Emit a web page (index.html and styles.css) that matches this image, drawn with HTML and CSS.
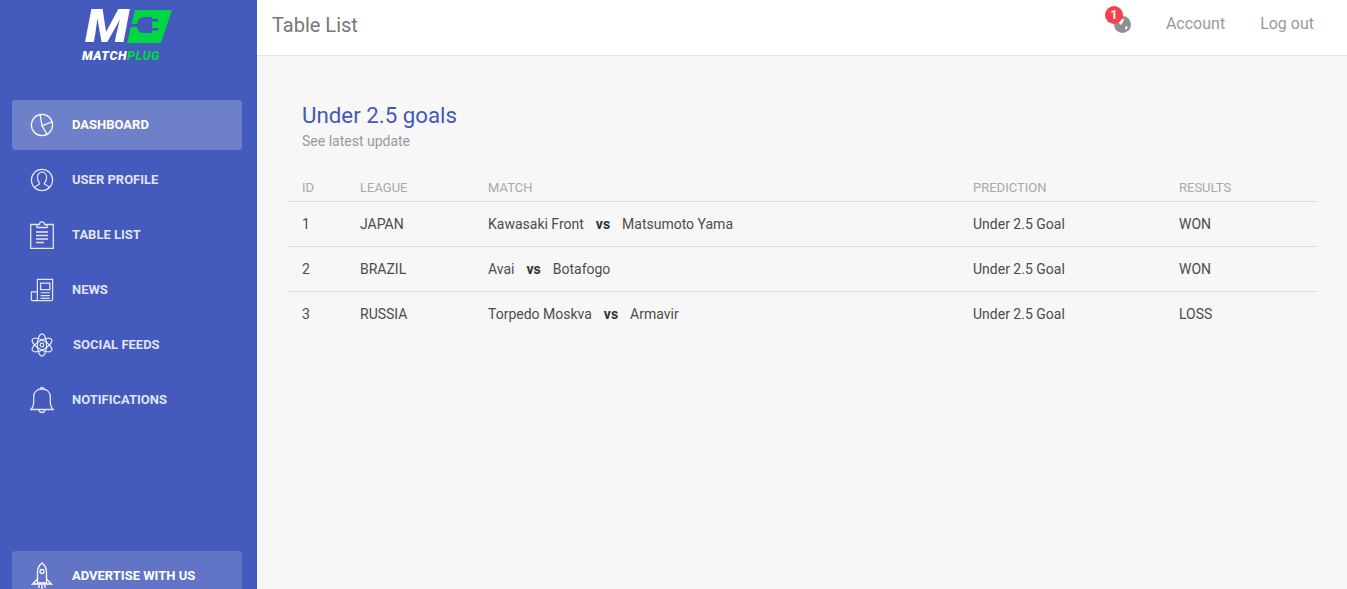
FILE: index.html
```html
<!DOCTYPE html>
<html lang="en">
<head>
<meta charset="utf-8">
<title>Table List</title>
<link rel="stylesheet" href="styles.css">
</head>
<body>
<div class="app">
  <aside class="sidebar">
    <div class="logo">
      <div class="logo-mark">
        <span class="logo-m">M</span>
        <svg class="logo-plug" width="46" height="33" viewBox="0 0 46 33">
          <path fill="#00d643" d="M8 0H45L34 33H0Z"/>
          <path fill="#4458bb" d="M2 14H10C10.500 10 13 7 17 7H25V9H31V11.500H25V18H31V20.500H25V23H17C13 23 10.500 20.500 10 17H1Z"/>
        </svg>
      </div>
      <div class="logo-text"><span>MATCH</span><span class="logo-green">PLUG</span></div>
    </div>
    <nav class="nav">
      <a class="nav-item active">
        <svg class="nav-icon" viewBox="0 0 26 26"><circle cx="13" cy="13" r="11.5"/><path d="M11 1.700L13 14L24 9.500M13 14L18.500 23"/></svg>
        <span>DASHBOARD</span>
      </a>
      <a class="nav-item">
        <svg class="nav-icon" viewBox="0 0 26 26"><circle cx="13" cy="13" r="11.500"/><path d="M5 21.500C6 18.500 10 18.500 10.500 17C9 15 8 12.500 8 10C8 7 10 4.500 13 4.500S18 7 18 10C18 12.500 17 15 15.500 17C16 18.500 20 18.500 21 21.500"/></svg>
        <span>USER PROFILE</span>
      </a>
      <a class="nav-item">
        <svg class="nav-icon tall" viewBox="0 0 24 28"><path d="M7 3.500H.7V27.300H23.300V3.500H17M7 3.500V6.500H17V3.500H14.500C14.500 0 9.500 0 9.500 3.500Z"/><path d="M6 11H18M6 14.500H18M6 18H18M6 21.500H14"/></svg>
        <span>TABLE LIST</span>
      </a>
      <a class="nav-item">
        <svg class="nav-icon" viewBox="0 0 26 26"><path d="M8 20V1.500H24.500V23C24.500 24 24 24.500 23 24.500H3C2 24.500 1.500 24 1.500 23V15H8"/><path d="M8 20V23C8 24 7.500 24.500 6 24.500"/><path d="M11.500 5.500H21.500V12.500H11.500ZM11.500 16H21.500M11.500 19H21.500M11.500 22H21.500"/></svg>
        <span>NEWS</span>
      </a>
      <a class="nav-item">
        <svg class="nav-icon" viewBox="0 0 26 26"><ellipse cx="13" cy="13" rx="5" ry="12"/><ellipse cx="13" cy="13" rx="5" ry="12" transform="rotate(60 13 13)"/><ellipse cx="13" cy="13" rx="5" ry="12" transform="rotate(120 13 13)"/><circle cx="13" cy="13" r="2"/></svg>
        <span class="label-social">SOCIAL FEEDS</span>
      </a>
      <a class="nav-item">
        <svg class="nav-icon tall" viewBox="0 0 24 28"><path d="M.7 23.500C3 21.500 3.700 19 3.700 16V11C3.700 6 7 3 12 3S20.300 6 20.300 11V16C20.300 19 21 21.500 23.300 23.500Z"/><path d="M10.500 2.700C10.500 1 13.500 1 13.500 2.700M9 24C9 27.300 15 27.300 15 24"/></svg>
        <span>NOTIFICATIONS</span>
      </a>
      <a class="nav-item advertise">
        <svg class="nav-icon tall" viewBox="0 0 24 28"><path d="M7.500 21V10C7.500 6 9.500 3 12 1C14.500 3 16.500 6 16.500 10V21Z"/><circle cx="12" cy="9.500" r="2"/><path d="M7.500 17L2.500 22H21.500L16.500 17M12 23V28M9 23V26M15 23V26"/></svg>
        <span>ADVERTISE WITH US</span>
      </a>
    </nav>
  </aside>
  <div class="main">
    <header class="topbar">
      <div class="page-title">Table List</div>
      <div class="top-links">
        <a class="globe-link">
          <svg class="globe" width="17" height="17" viewBox="0 0 17 17"><circle cx="8.500" cy="8.500" r="8.500" fill="#8f8f8f"/><path fill="#fff" d="M4 3L10 3L9 6L7 9L5 7ZM12 10L14 11L12 14L11 12Z"/></svg>
          <span class="badge">1</span>
        </a>
        <a class="top-link">Account</a>
        <a class="top-link">Log out</a>
      </div>
    </header>
    <main class="content">
      <div class="card-head">
        <h2 class="card-title">Under 2.5 goals</h2>
        <p class="card-sub">See latest update</p>
      </div>
      <table class="table">
        <thead>
          <tr><th class="c-id">ID</th><th class="c-league">LEAGUE</th><th class="c-match">MATCH</th><th class="c-pred">PREDICTION</th><th>RESULTS</th></tr>
        </thead>
        <tbody>
          <tr><td>1</td><td>JAPAN</td><td>Kawasaki Front <b>vs</b> Matsumoto Yama</td><td>Under 2.5 Goal</td><td>WON</td></tr>
          <tr><td>2</td><td>BRAZIL</td><td>Avai <b>vs</b> Botafogo</td><td>Under 2.5 Goal</td><td>WON</td></tr>
          <tr><td>3</td><td>RUSSIA</td><td>Torpedo Moskva <b>vs</b> Armavir</td><td>Under 2.5 Goal</td><td>LOSS</td></tr>
        </tbody>
      </table>
    </main>
  </div>
</div>
</body>
</html>
```
FILE: styles.css
```css
* { box-sizing: border-box; }
html, body { margin: 0; height: 100%; overflow: hidden; }
body { font-family: Roboto, "Liberation Sans", sans-serif; color: #333; background: #f7f7f7; }
.app { display: flex; height: 589px; overflow: hidden; }

.sidebar { width: 257px; flex: none; background: #445abc; padding: 10px 15px 0 12px; overflow: hidden; }
.logo { height: 90px; display: flex; flex-direction: column; padding-left: 70px; }
.logo-mark { display: flex; align-items: flex-start; height: 33px; padding-left: 3px; }
.logo-m { display: block; width: 42px; font-size: 46px; line-height: 33px; font-weight: 900; font-style: italic; color: #fff; transform: scaleX(1.12); transform-origin: left center; }
.logo-plug { flex: none; }
.logo-text { margin-top: 7px; font-size: 12.5px; letter-spacing: .55px; line-height: 12px; font-weight: 900; font-style: italic; color: #fff; white-space: nowrap; }
.logo-green { color: #00d643; }

.nav { display: flex; flex-direction: column; gap: 5px; }
.nav-item { display: flex; align-items: center; height: 50px; flex: none; border-radius: 4px; padding-left: 18px; color: rgba(255,255,255,.85); font-size: 13px; font-weight: 700; }
.nav-item span { margin: 0 0 2px 18px; }
.nav-icon { width: 24px; height: 24px; flex: none; fill: none; stroke: currentColor; stroke-width: 1.3; }
.nav-icon.tall { height: 28px; }
.nav-item .label-social { margin-left: 19px; }
.active { background: rgba(255,255,255,.23); color: #fff; }
.advertise { margin-top: 121px; background: rgba(255,255,255,.16); color: #fff; }

.main { flex: 1; min-width: 0; display: flex; flex-direction: column; }
.topbar { height: 56px; flex: none; background: #fff; border-bottom: 1px solid #e4e4e4; display: flex; align-items: center; justify-content: space-between; padding: 0 33px 0 15px; }
.page-title { font-size: 20px; color: #777; position: relative; top: -3px; }
.top-links { display: flex; align-items: center; gap: 35px; position: relative; top: -4px; }
.top-link { font-size: 16px; color: #9a9a9a; }
.globe-link { position: relative; display: block; width: 17px; height: 17px; top: 1px; }
.globe { display: block; }
.badge { position: absolute; left: -9px; top: -10px; width: 18px; height: 18px; border-radius: 50%; background: #fb404b; color: #fff; font-size: 12px; line-height: 18px; font-weight: 700; text-align: center; }

.content { padding: 45px 30px 0; }
.card-head { padding: 0 15px; }
.card-title { margin: 0 0 2px; font-size: 22.3px; line-height: 28px; font-weight: 400; color: #4458bb; }
.card-sub { margin: 0; font-size: 14px; line-height: 20px; color: #9a9a9a; }
.table { width: 100%; margin-top: 18px; border-collapse: collapse; table-layout: fixed; font-size: 14px; }
.table th { height: 32px; padding: 5px 15px 0; font-size: 13px; font-weight: 400; color: #a9a9a9; text-align: left; border-bottom: 1px solid #ddd; }
.table td { height: 45px; padding: 0 15px; color: #4c4c4c; border-bottom: 1px solid #ddd; }
.table tbody tr:last-child td { border-bottom: 0; }
.table b { margin: 0 8.5px; color: #333; }
.c-id { width: 58px; }
.c-league { width: 128px; }
.c-match { width: 485px; }
.c-pred { width: 206px; }
```
